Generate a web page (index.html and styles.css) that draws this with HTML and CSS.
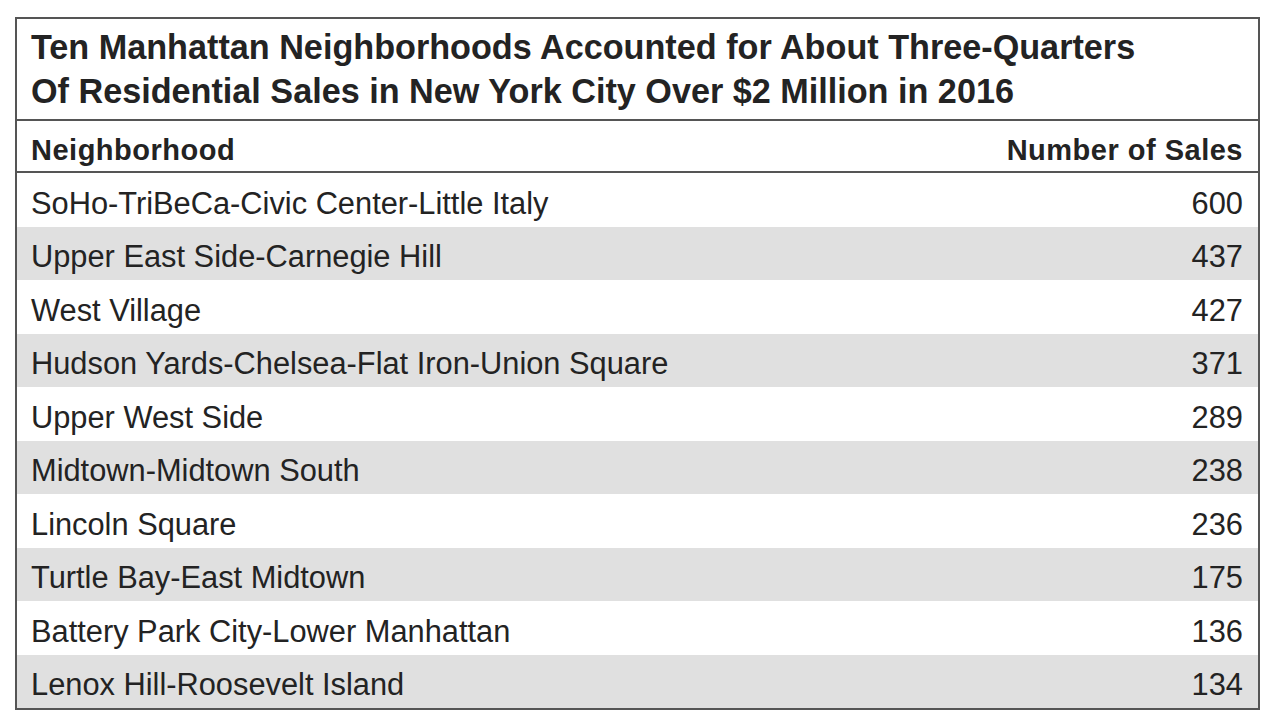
FILE: index.html
```html
<!DOCTYPE html>
<html>
<head>
<meta charset="utf-8">
<link rel="stylesheet" href="styles.css">
</head>
<body>
<div class="frame">
  <div class="title">Ten Manhattan Neighborhoods Accounted for About Three-Quarters<br>Of Residential Sales in New York City Over $2 Million in 2016</div>
  <div class="head row">
    <span>Neighborhood</span><span>Number of Sales</span>
  </div>
  <div class="row"><span>SoHo-TriBeCa-Civic Center-Little Italy</span><span>600</span></div>
  <div class="row alt"><span>Upper East Side-Carnegie Hill</span><span>437</span></div>
  <div class="row"><span>West Village</span><span>427</span></div>
  <div class="row alt"><span>Hudson Yards-Chelsea-Flat Iron-Union Square</span><span>371</span></div>
  <div class="row"><span>Upper West Side</span><span>289</span></div>
  <div class="row alt"><span>Midtown-Midtown South</span><span>238</span></div>
  <div class="row"><span>Lincoln Square</span><span>236</span></div>
  <div class="row alt"><span>Turtle Bay-East Midtown</span><span>175</span></div>
  <div class="row"><span>Battery Park City-Lower Manhattan</span><span>136</span></div>
  <div class="row alt"><span>Lenox Hill-Roosevelt Island</span><span>134</span></div>
</div>
</body>
</html>
```
FILE: styles.css
```css
html, body {
  margin: 0;
  padding: 0;
  background: #fff;
}
body {
  padding: 17px 0 0 15px;
  font-family: "Liberation Sans", Arial, sans-serif;
  color: #232323;
}
.frame {
  width: 1245px;
  border: 2px solid #555;
  box-sizing: border-box;
}
.title {
  font-weight: bold;
  font-size: 34.2px;
  line-height: 44px;
  height: 102px;
  box-sizing: border-box;
  padding: 6px 14px;
  border-bottom: 2px solid #555;
  white-space: nowrap;
}
.row {
  display: flex;
  justify-content: space-between;
  align-items: center;
  height: 53.5px;
  padding: 8px 15px 0 14px;
  font-size: 30.8px;
  box-sizing: border-box;
  white-space: nowrap;
}
.head {
  height: 52px;
  padding-top: 9px;
  font-weight: bold;
  font-size: 29px;
  letter-spacing: 0.5px;
  border-bottom: 2px solid #555;
}
.alt {
  background: #e0e0e0;
}
```
